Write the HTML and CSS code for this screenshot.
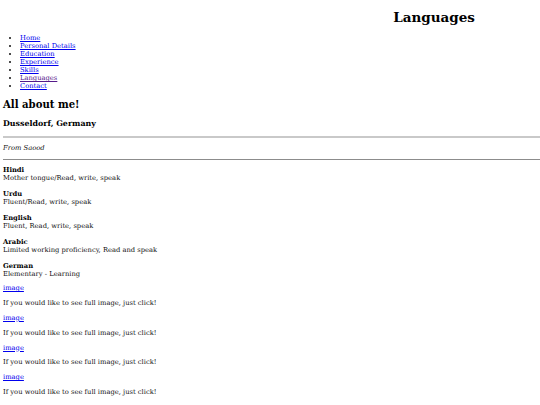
FILE: index.html
```html
<!DOCTYPE html>
<html lang="en">
<head>
<meta charset="utf-8">
<title>Languages</title>
<link rel="stylesheet" href="styles.css">
</head>
<body>
<header class="site-header">
  <h1 class="page-title">Languages</h1>
</header>
<nav class="site-nav">
  <ul>
    <li><a href="#home">Home</a></li>
    <li><a href="#personal">Personal Details</a></li>
    <li><a href="#education">Education</a></li>
    <li><a href="#experience">Experience</a></li>
    <li><a href="#skills">Skills</a></li>
    <li><a class="visited" href="#languages">Languages</a></li>
    <li><a href="#contact">Contact</a></li>
  </ul>
</nav>
<main class="content">
  <h2 class="about-title">All about me!</h2>
  <h3 class="location">Dusseldorf, Germany</h3>
  <hr class="rule-light">
  <p class="from"><em>From Saood</em></p>
  <hr class="rule-dark">
  <section class="languages">
    <p class="lang"><b>Hindi</b><br>Mother tongue/Read, write, speak</p>
    <p class="lang"><b>Urdu</b><br>Fluent/Read, write, speak</p>
    <p class="lang"><b>English</b><br>Fluent, Read, write, speak</p>
    <p class="lang"><b>Arabic</b><br>Limited working proficiency, Read and speak</p>
    <p class="lang"><b>German</b><br>Elementary - Learning</p>
  </section>
  <section class="gallery">
    <p class="img-link"><a href="#img1">image</a></p>
    <p class="img-note">If you would like to see full image, just click!</p>
    <p class="img-link"><a href="#img2">image</a></p>
    <p class="img-note">If you would like to see full image, just click!</p>
    <p class="img-link"><a href="#img3">image</a></p>
    <p class="img-note">If you would like to see full image, just click!</p>
    <p class="img-link"><a href="#img4">image</a></p>
    <p class="img-note">If you would like to see full image, just click!</p>
  </section>
</main>
</body>
</html>
```

FILE: styles.css
```css
html, body {
  overflow: hidden;
}
body {
  margin: 0;
  padding: 0 0 0 3px;
  font-family: "DejaVu Serif", serif;
  font-size: 6.75px;
  line-height: 8px;
  color: #111;
  background: #fff;
}
a {
  color: #0000ee;
}
a.visited {
  color: #551a8b;
}
.page-title {
  margin: 9px 0 0;
  padding-left: 325px;
  text-align: center;
  font-size: 13.5px;
  line-height: 16px;
  font-weight: bold;
  color: #000;
}
.site-nav ul {
  margin: 9px 0 0;
  padding-left: 17px;
}
.site-nav li {
  line-height: 8px;
}
.about-title {
  margin: 8px 0 0;
  font-size: 10.125px;
  line-height: 12px;
  color: #000;
}
.location {
  margin: 9px 0 0;
  font-size: 7.9px;
  line-height: 10px;
  color: #000;
}
.rule-light {
  margin: 7px 0 0;
  height: 0;
  border: 0;
  border-top: 2px solid #c9c9c9;
}
.from {
  margin: 6px 0 0;
}
.rule-dark {
  margin: 7px 0 0;
  height: 0;
  border: 0;
  border-top: 1px solid #8c8c8c;
}
.languages {
  margin-top: 6px;
  display: flex;
  flex-direction: column;
  gap: 8px;
}
.lang {
  margin: 0;
}
.lang b {
  color: #000;
}
.gallery {
  margin-top: 6px;
  display: flex;
  flex-direction: column;
  gap: 6.9px;
}
.gallery p {
  margin: 0;
}
```
